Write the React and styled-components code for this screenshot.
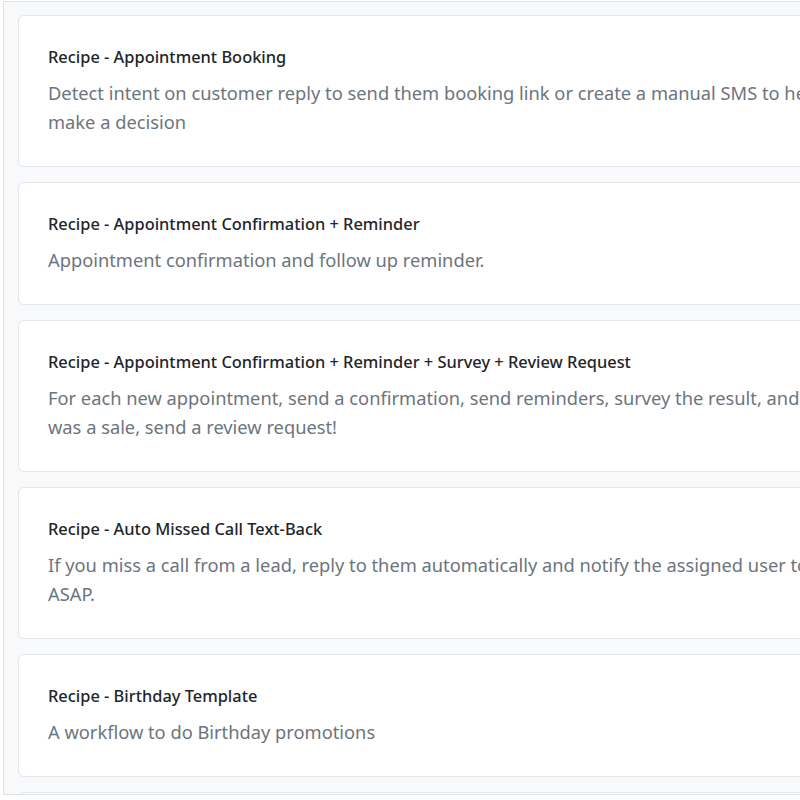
import React from "react";
import styled, { createGlobalStyle } from "styled-components";

const GlobalStyle = createGlobalStyle`
  html, body {
    margin: 0;
    padding: 0;
    background: #ffffff;
  }
  body {
    font-family: "Noto Sans", "Open Sans", sans-serif;
  }
`;

// descriptions are kept as the lines the list shows them in
const recipes = [
  {
    title: "Recipe - Appointment Booking",
    lines: [
      "Detect intent on customer reply to send them booking link or create a manual SMS to help them",
      "make a decision",
    ],
  },
  {
    title: "Recipe - Appointment Confirmation + Reminder",
    lines: ["Appointment confirmation and follow up reminder."],
  },
  {
    title: "Recipe - Appointment Confirmation + Reminder + Survey + Review Request",
    lines: [
      "For each new appointment, send a confirmation, send reminders, survey the result, and if it",
      "was a sale, send a review request!",
    ],
  },
  {
    title: "Recipe - Auto Missed Call Text-Back",
    lines: [
      "If you miss a call from a lead, reply to them automatically and notify the assigned user to call",
      "ASAP.",
    ],
  },
  {
    title: "Recipe - Birthday Template",
    lines: ["A workflow to do Birthday promotions"],
  },
  {
    title: "Recipe - Call Connect",
    lines: ["Connect a call between the assigned user and a new lead."],
  },
];

const Panel = styled.div`
  margin: 1px 0 0 3px;
  height: 794px;
  width: 940px;
  overflow: hidden;
  border: 1px solid #dfe1e4;
  background: #f7f9fb;
  box-sizing: border-box;
`;

const List = styled.div`
  display: flex;
  flex-direction: column;
  gap: 15px;
  padding: 13px 0 0 14px;
`;

const Card = styled.div`
  width: 920px;
  box-sizing: border-box;
  background: #ffffff;
  border: 1px solid #e3e6ea;
  border-radius: 6px;
  padding: 28px 29px 30px;
`;

const Title = styled.h3`
  margin: 0;
  font-size: 16.4px;
  font-weight: 500;
  line-height: 26px;
  color: #212529;
  white-space: nowrap;
`;

const Text = styled.p`
  margin: 8px 0 0;
  font-size: 18.3px;
  line-height: 29px;
  color: #6c757d;
`;

const Line = styled.span`
  display: block;
  white-space: nowrap;
`;

export default function App() {
  return (
    <>
      <GlobalStyle />
      <Panel>
        <List>
          {recipes.map((r) => (
            <Card key={r.title}>
              <Title>{r.title}</Title>
              <Text>
                {r.lines.map((l) => (
                  <Line key={l}>{l}</Line>
                ))}
              </Text>
            </Card>
          ))}
        </List>
      </Panel>
    </>
  );
}
